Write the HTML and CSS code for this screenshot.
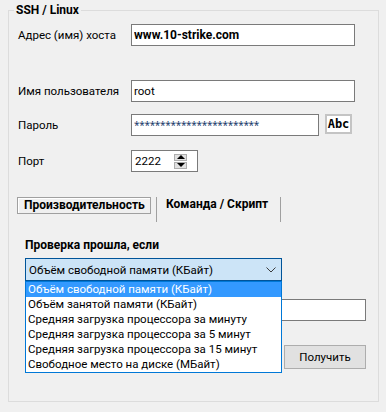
FILE: index.html
```html
<!DOCTYPE html>
<html lang="ru">

<head>
  <meta charset="UTF-8" />
  <title>SSH / Linux</title>
  <link rel="stylesheet" href="styles.css">
</head>

<body>
  <fieldset class="group">
    <legend>SSH / Linux</legend>

    <div class="row row-host">
      <label for="host">Адрес (имя) хоста</label>
      <input id="host" class="field field-wide bold" type="text" value="www.10-strike.com" />
    </div>

    <div class="row row-user">
      <label for="user">Имя пользователя</label>
      <input id="user" class="field field-wide" type="text" value="root" />
    </div>

    <div class="row row-pass">
      <label for="pass">Пароль</label>
      <input id="pass" class="field field-pass stars" type="text" value="************************" />
      <button class="abc" type="button">Abc</button>
    </div>

    <div class="row row-port">
      <label for="port">Порт</label>
      <div class="field spin">
        <span class="spin-value">2222</span>
        <div class="spin-buttons">
          <span class="spin-btn"><span class="tri-up"></span></span>
          <span class="spin-btn"><span class="tri-down"></span></span>
        </div>
      </div>
    </div>

    <div class="tabs">
      <div class="tab tab-active">Производительность</div>
      <div class="tab-sep"></div>
      <div class="tab">Команда / Скрипт</div>
      <div class="tab-sep"></div>
    </div>

    <div class="check-title">Проверка прошла, если</div>

    <div class="combo">
      <div class="combo-box">
        <span>Объём свободной памяти (КБайт)</span>
        <svg class="chevron" width="10" height="6" viewBox="0 0 10 6">
          <polyline points="0.5,0.5 5,5 9.5,0.5" fill="none" stroke="#3c3c3c" stroke-width="1" />
        </svg>
      </div>
      <ul class="combo-list">
        <li class="selected">Объём свободной памяти (КБайт)</li>
        <li>Объём занятой памяти (КБайт)</li>
        <li>Средняя загрузка процессора за минуту</li>
        <li>Средняя загрузка процессора за 5 минут</li>
        <li>Средняя загрузка процессора за 15 минут</li>
        <li>Свободное место на диске (МБайт)</li>
      </ul>
    </div>

    <input class="field field-value" type="text" value="" />

    <button class="get-btn" type="button">Получить</button>
  </fieldset>
</body>

</html>
```

FILE: styles.css
```css
* {
  box-sizing: border-box;
}

body {
  margin: 0;
  background: #f0f0f0;
  font-family: Roboto, 'Noto Sans', sans-serif;
  font-size: 11.5px;
  color: #000;
}

.group {
  margin: 2px 7px 0 8px;
  padding: 0 0 0 9px;
  border: 1px solid #dcdcdc;
  height: 400px;
  min-width: 0;
}

legend {
  font-weight: bold;
  font-size: 12px;
  line-height: 16px;
  padding: 0 2px;
  margin-left: -4px;
}

.row {
  display: flex;
  align-items: flex-start;
  height: 22px;
}

.row label {
  width: 113px;
  line-height: 22px;
}

.row-host {
  margin-top: 6px;
}

.row-user {
  margin-top: 34px;
}

.row-pass {
  margin-top: 12px;
}

.row-port {
  margin-top: 14px;
}

.field {
  height: 22px;
  border: 1px solid #7a7a7a;
  background: #fff;
  font: inherit;
  color: #000;
  margin: 0;
  padding: 0 2px;
  outline: none;
}

.bold {
  font-weight: bold;
  font-size: 12px;
}

.field-wide {
  width: 224px;
}

.field-pass {
  width: 188px;
}

.stars {
  font-family: 'Noto Sans', sans-serif;
  font-size: 10px;
  color: #1a3a6a;
  letter-spacing: -0.3px;
}

.abc {
  margin-left: 6px;
  width: 27px;
  height: 20px;
  padding: 0;
  border: 2px solid #c4c4c4;
  background: #fff;
  font-family: 'DejaVu Sans Mono', monospace;
  font-weight: bold;
  font-size: 12px;
  color: #000;
}

.spin {
  width: 67px;
  display: flex;
  align-items: center;
  justify-content: space-between;
  padding: 0 10px 0 3px;
}

.spin-buttons {
  display: flex;
  flex-direction: column;
  gap: 1px;
}

.spin-btn {
  width: 13px;
  height: 7px;
  background: #e1e1e1;
  border: 1px solid #adadad;
  display: flex;
  align-items: center;
  justify-content: center;
}

.tri-up {
  border-left: 4px solid transparent;
  border-right: 4px solid transparent;
  border-bottom: 4px solid #000;
}

.tri-down {
  border-left: 4px solid transparent;
  border-right: 4px solid transparent;
  border-top: 4px solid #000;
}

.tabs {
  display: flex;
  align-items: flex-start;
  height: 25px;
  margin-top: 25px;
  margin-left: -1px;
  font-weight: bold;
  font-size: 12px;
}

.tab {
  height: 17px;
  line-height: 15px;
  padding-left: 9px;
  width: 123px;
  white-space: nowrap;
}

.tab-active {
  width: 134px;
  padding-left: 6px;
  border: 1px solid #a0a0a0;
  box-shadow: inset 1px 1px 0 #fff;
  margin-right: 5px;
}

.tab-sep {
  width: 1px;
  height: 25px;
  background: #a0a0a0;
}

.check-title {
  font-weight: bold;
  font-size: 12px;
  line-height: 16px;
  margin: 15px 0 0 7px;
}

.combo {
  position: relative;
  width: 257px;
  margin: 5px 0 0 7px;
}

.combo-box {
  height: 23px;
  background: #cce4f7;
  border: 1px solid #005499;
  display: flex;
  align-items: center;
  justify-content: space-between;
  padding: 0 5px 0 3px;
}

.chevron {
  display: block;
}

.combo-list {
  position: absolute;
  top: 100%;
  left: 0;
  width: 100%;
  margin: 0;
  padding: 0;
  list-style: none;
  background: #fff;
  border: 1px solid #0078d7;
  z-index: 10;
}

.combo-list li {
  height: 15px;
  line-height: 15px;
  padding-left: 2px;
  white-space: nowrap;
}

.combo-list li.selected {
  background: #3399ff;
  color: #fff;
}

.field-value {
  display: block;
  width: 341px;
  margin: 18px 0 0 7px;
}

.get-btn {
  display: block;
  width: 82px;
  height: 24px;
  margin: 24px 0 0 266px;
  padding: 0;
  background: #e1e1e1;
  border: 1px solid #adadad;
  font: inherit;
  color: #000;
}
```
